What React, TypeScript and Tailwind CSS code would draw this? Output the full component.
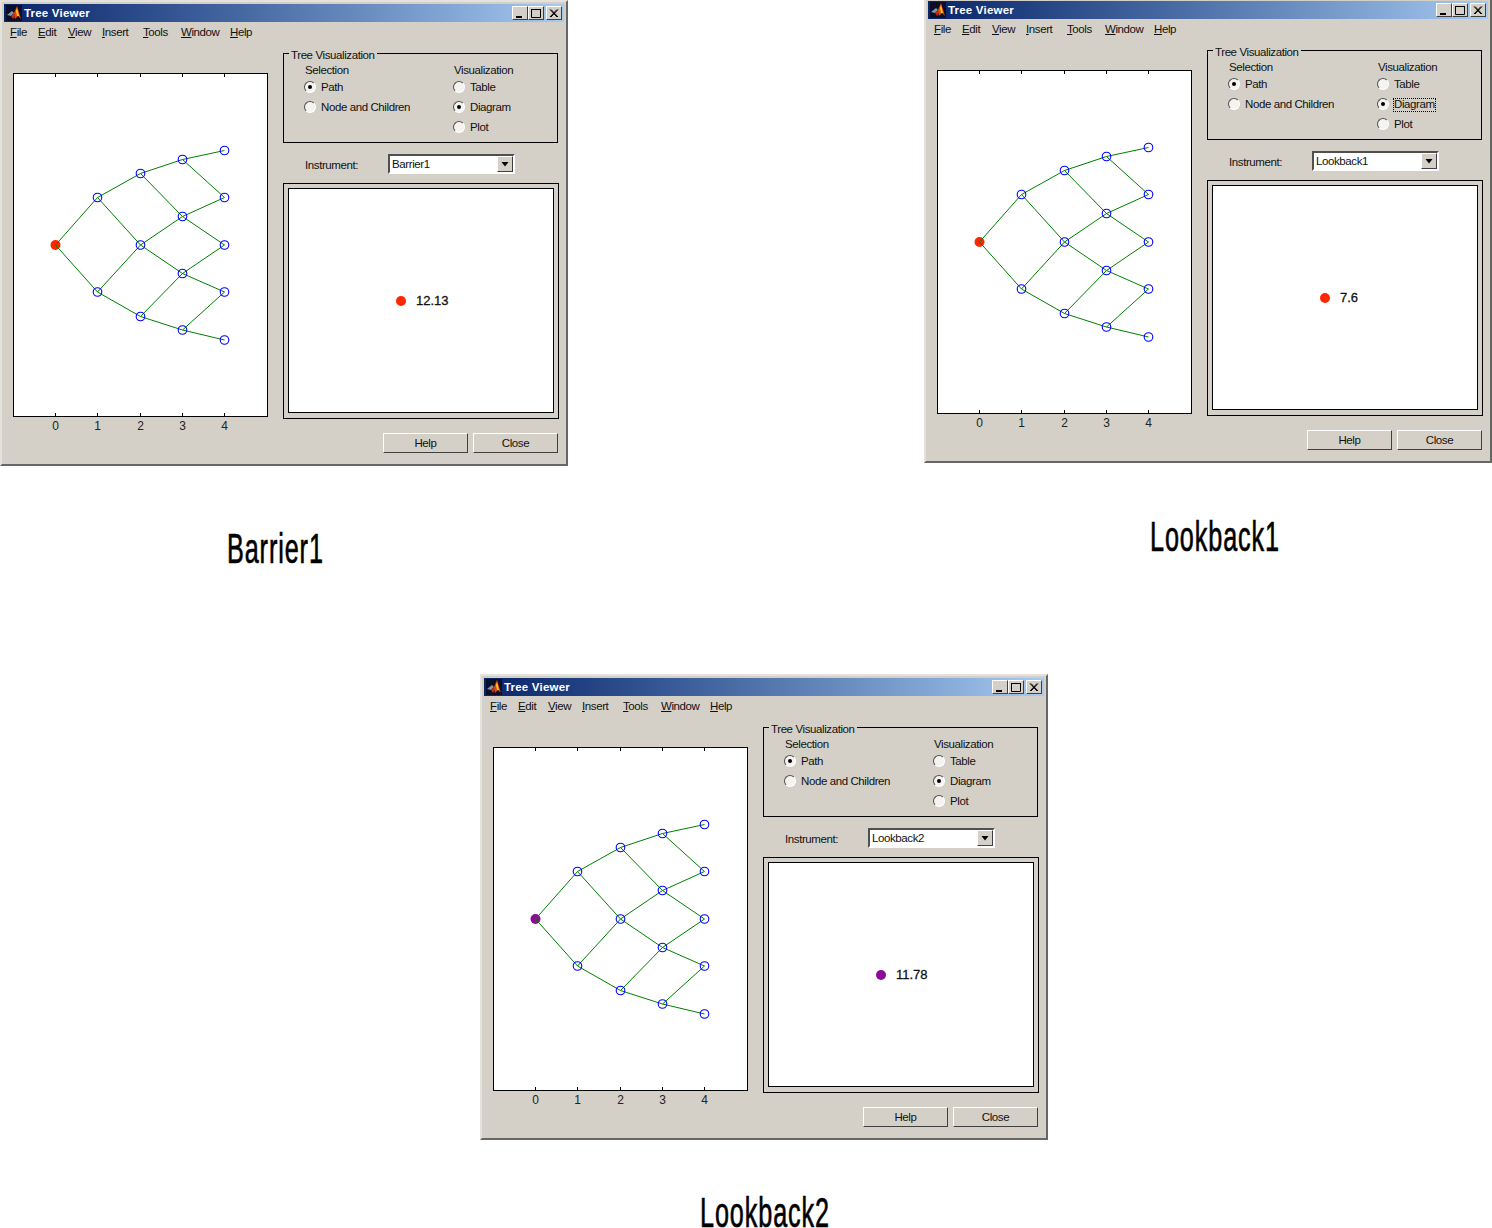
const FONT = 'font-["Liberation_Sans",Arial,sans-serif]';

const COLS = [55.5, 97.5, 140.5, 182.5, 224.5];
const NODES = [[245], [197.5, 292], [173.5, 245, 316.5], [159.5, 216.5, 273.5, 330], [150.5, 197.5, 245, 292, 340]];
const MENU: [string, string, string][] = [
  ['F', 'ile', 'w-[28px]'],
  ['E', 'dit', 'w-[30px]'],
  ['V', 'iew', 'w-[34px]'],
  ['I', 'nsert', 'w-[41px]'],
  ['T', 'ools', 'w-[38px]'],
  ['W', 'indow', 'w-[49px]'],
  ['H', 'elp', 'w-[30px]'],
];

function Logo() {
  return (
    <svg width="16" height="16" viewBox="0 0 16 16" className="shrink-0">
      <rect width="16" height="16" fill="#0b0f2a" />
      <polygon points="1,10 6,6 8,8 5,11" fill="#7d97a8" />
      <polygon points="5,11 8,8 9,11 7,14" fill="#c22a12" />
      <polygon points="8,8 11,1 15,14 12,11 9,14" fill="#e8420f" />
      <polygon points="10,6 11,3 13,11 11,11" fill="#ffd21f" />
    </svg>
  );
}

function CaptionButton({ kind, className }: { kind: 'min' | 'max' | 'close'; className?: string }) {
  return (
    <div className={`flex h-[14px] w-[16px] items-center justify-center border border-t-white border-l-white border-r-[#404040] border-b-[#404040] bg-[#d4d0c8] ${className ?? ''}`}>
      <svg width="12" height="11" viewBox="0 0 12 11">
        {kind === 'min' && <rect x="2" y="8" width="6" height="2" fill="#000" />}
        {kind === 'max' && <path d="M1.5 1.5h9v8h-9z M1 1.5h10" fill="none" stroke="#000" />}
        {kind === 'close' && <path d="M2 1.5l7 7.5M3 1.5l7 7.5M9 1.5l-7 7.5M10 1.5l-7 7.5" fill="none" stroke="#000" />}
      </svg>
    </div>
  );
}

function TreePlot({ color }: { color: string }) {
  return (
    <svg width="256" height="366" viewBox="0 0 256 366" className="block shrink-0">
      <rect x="0.5" y="0.5" width="254" height="343" fill="#fff" stroke="#000" />
      {COLS.map((x) => (
        <g key={x} stroke="#000">
          <line x1={x - 13} x2={x - 13} y1="1" y2="4" />
          <line x1={x - 13} x2={x - 13} y1="340" y2="343" />
        </g>
      ))}
      {/* root marker sits under the branches */}
      <circle cx={COLS[0] - 13} cy={NODES[0][0] - 73} r="5" fill={color} />
      {NODES.slice(0, -1).map((col, c) =>
        col.map((y, i) => (
          <g key={`${c}-${i}`} stroke="#008000">
            <line x1={COLS[c] - 13} y1={y - 73} x2={COLS[c + 1] - 13} y2={NODES[c + 1][i] - 73} />
            <line x1={COLS[c] - 13} y1={y - 73} x2={COLS[c + 1] - 13} y2={NODES[c + 1][i + 1] - 73} />
          </g>
        )),
      )}
      {NODES.slice(1).map((col, c) =>
        col.map((y, i) => (
          <circle key={`${c}-${i}`} cx={COLS[c + 1] - 13} cy={y - 73} r="4.3" fill="none" stroke="#0000ff" strokeWidth="1.1" />
        )),
      )}
      {COLS.map((x, i) => (
        <text key={x} x={x - 13} y="357" textAnchor="middle" fontSize="12" fill="#222" fontFamily="Liberation Sans">
          {i}
        </text>
      ))}
    </svg>
  );
}

function Radio({ label, checked, focused }: { label: string; checked?: boolean; focused?: boolean }) {
  return (
    <div className="flex h-[20px] items-center">
      <div className="flex h-[12px] w-[12px] items-center justify-center rounded-full border border-t-[#505050] border-l-[#505050] border-r-white border-b-white bg-[#f4f3f0]">
        {checked && <div className="h-[4px] w-[4px] rounded-full bg-black" />}
      </div>
      <span className={`ml-[5px] mt-[2px] ${focused ? 'outline outline-1 outline-dotted outline-black' : ''}`}>{label}</span>
    </div>
  );
}

function PushButton({ label }: { label: string }) {
  return (
    <div className="flex h-[20px] w-[85px] items-center justify-center border border-t-white border-l-white border-r-[#404040] border-b-[#404040] bg-[#d4d0c8] pt-[2px]">
      {label}
    </div>
  );
}

interface WindowProps {
  name: string;
  value: string;
  color: string;
  focusDiagram?: boolean;
  position: string;
}

function TreeViewer({ name, value, color, focusDiagram, position }: WindowProps) {
  return (
    <div className={`absolute ${position} h-[466px] w-[568px] border-2 border-t-[#e4e2dd] border-l-[#e4e2dd] border-r-[#666] border-b-[#666] bg-[#d4d0c8] p-[2px] text-[11.5px] leading-none tracking-[-0.4px] text-[#111] ${FONT}`}>
      {/* Title bar */}
      <div className="flex h-[18px] items-center bg-gradient-to-r from-[#0a246a] to-[#a6caf0] pl-[2px] pr-[2px]">
        <Logo />
        <span className="ml-[2px] pt-[2px] text-[11.5px] font-bold tracking-[0.2px] text-white">Tree Viewer</span>
        <CaptionButton kind="min" className="ml-auto" />
        <CaptionButton kind="max" />
        <CaptionButton kind="close" className="ml-[2px]" />
      </div>

      {/* Menu */}
      <div className="flex h-[19px] items-center pl-[6px] pt-[3px]">
        {MENU.map(([first, rest, width]) => (
          <span key={first} className={width}>
            <u>{first}</u>
            {rest}
          </span>
        ))}
      </div>

      <div className="flex pl-[9px]">
        <div className="mt-[32px] w-[270px] shrink-0">
          <TreePlot color={color} />
        </div>

        <div className="mt-[12px] w-[276px] shrink-0">
          {/* Tree Visualization group */}
          <div className="relative h-[90px] w-[275px] border border-black pl-[20px] pt-[9px]">
            <span className="absolute left-[5px] top-[-5px] bg-[#d4d0c8] px-[2px] pt-[1px]">Tree Visualization</span>
            <div className="flex">
              <div className="w-[149px]">
                <div className="ml-[1px] flex h-[14px] items-center pt-[2px]">Selection</div>
                <Radio label="Path" checked />
                <Radio label="Node and Children" />
              </div>
              <div>
                <div className="ml-[1px] flex h-[14px] items-center pt-[2px]">Visualization</div>
                <Radio label="Table" />
                <Radio label="Diagram" checked focused={focusDiagram} />
                <Radio label="Plot" />
              </div>
            </div>
          </div>

          {/* Instrument */}
          <div className="mt-[11px] flex h-[20px] items-center pl-[22px]">
            <span className="w-[83px] pt-[4px]">Instrument:</span>
            <div className="flex h-[20px] w-[127px] items-center justify-between border-2 border-t-[#505050] border-l-[#505050] border-r-white border-b-white bg-white pl-[2px]">
              <span className="pt-[2px]">{name}</span>
              <div className="flex h-[16px] w-[16px] items-center justify-center border border-t-white border-l-white border-r-[#404040] border-b-[#404040] bg-[#d4d0c8]">
                <svg width="8" height="5" viewBox="0 0 8 5">
                  <polygon points="0.5,0 7.5,0 4,4.5" fill="#000" />
                </svg>
              </div>
            </div>
          </div>

          {/* Value panel */}
          <div className="mt-[9px] h-[236px] w-[276px] border border-black p-[4px] pb-[5px]">
            <div className="flex h-full items-center border border-black bg-white pl-[107px]">
              <div className="h-[10px] w-[10px] rounded-full" style={{ backgroundColor: color }} />
              <span className="ml-[10px] text-[13px] tracking-normal [-webkit-text-stroke:0.3px_#111]">{value}</span>
            </div>
          </div>

          <div className="mt-[14px] flex justify-end gap-[5px] pr-[1px]">
            <PushButton label="Help" />
            <PushButton label="Close" />
          </div>
        </div>
      </div>
    </div>
  );
}

function Caption({ text, position }: { text: string; position: string }) {
  return (
    <div className={`absolute ${position} origin-left scale-x-[0.6] whitespace-nowrap font-["Liberation_Sans",sans-serif] text-[42px] leading-[30px] tracking-[1.5px] text-black [-webkit-text-stroke:0.7px_#000]`}>
      {text}
    </div>
  );
}

export default function App() {
  return (
    <div className="relative h-[1228px] w-[1492px] overflow-hidden bg-white">
      <TreeViewer name="Barrier1" value="12.13" color="#ff2600" position="left-0 top-0" />
      <TreeViewer name="Lookback1" value="7.6" color="#ff2600" focusDiagram position="left-[924px] top-[-3px]" />
      <TreeViewer name="Lookback2" value="11.78" color="#8b0a96" position="left-[480px] top-[674px]" />
      <Caption text="Barrier1" position="left-[227px] top-[534px]" />
      <Caption text="Lookback1" position="left-[1150px] top-[522px]" />
      <Caption text="Lookback2" position="left-[700px] top-[1198px]" />
    </div>
  );
}
